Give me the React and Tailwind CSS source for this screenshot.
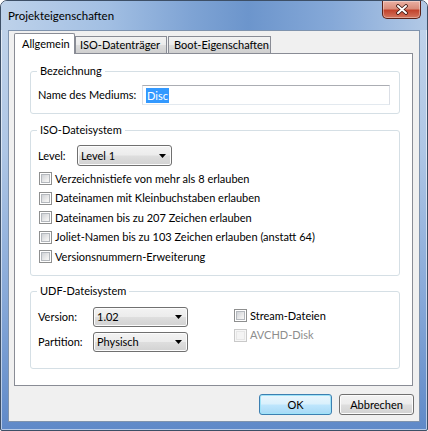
import React from "react";

const font = "font-['Lato','Liberation_Sans',sans-serif] text-[11px] leading-[16px] whitespace-nowrap";

function Checkbox({ label, disabled }) {
  return (
    <div className="flex h-[19.5px] items-center gap-[3px]">
      <span
        className={`ml-[1px] flex h-[13px] w-[13px] flex-none items-center justify-center border ${
          disabled ? "border-[#c9c9c9] bg-[#f7f7f7]" : "border-[#8e8f8f] bg-white"
        }`}
      >
        <span
          className={`h-[9px] w-[9px] border ${
            disabled
              ? "border-[#e6e6e6] bg-[#f4f4f4]"
              : "border-[#b4b8bd] bg-[linear-gradient(135deg,#cfd2d6_0%,#eeeeee_70%,#f7f7f7_100%)]"
          }`}
        />
      </span>
      <span className={disabled ? "text-[#8d8d8d]" : "text-black"}>{label}</span>
    </div>
  );
}

function Combo({ value, tall }) {
  return (
    <div
      className={`flex ${tall ? "h-[21px]" : "h-[20px]"} w-[95px] flex-none items-center justify-between rounded-[3px] border border-[#707070] bg-[linear-gradient(180deg,#f3f3f3_0%,#ececec_48%,#dedede_52%,#d2d2d2_100%)] pl-[3px] pr-[5px] shadow-[inset_0_0_0_1px_#fcfcfc]`}
    >
      <span>{value}</span>
      <svg width="7" height="4" viewBox="0 0 7 4">
        <path d="M0 0h7L3.5 4z" fill="#000" />
      </svg>
    </div>
  );
}

function Group({ title, className, children }) {
  return (
    <div className={`relative rounded-[3px] border border-[#d5dfe5] ${className}`}>
      <span className="absolute -top-[9px] left-[6px] bg-white px-[3px] text-black">{title}</span>
      {children}
    </div>
  );
}

function Button({ children, primary }) {
  return (
    <button
      className={`flex h-[21px] items-center justify-center rounded-[3px] border ${
        primary
          ? "w-[73px] border-[#3c7fb1] bg-[linear-gradient(180deg,#eaf6fd_0%,#d9f0fc_48%,#bee6fd_52%,#a7d9f5_100%)] shadow-[inset_0_0_0_1px_#9fe3f8]"
          : "w-[75px] border-[#707070] bg-[linear-gradient(180deg,#f3f3f3_0%,#ececec_48%,#dedede_52%,#d2d2d2_100%)] shadow-[inset_0_0_0_1px_#fcfcfc]"
      } text-black`}
    >
      {children}
    </button>
  );
}

export default function App() {
  return (
    <div
      className={`flex h-[431px] w-[428px] flex-col rounded-t-[7px] rounded-b-[2px] border border-[#3d4f66] bg-[linear-gradient(180deg,#c3d5eb_0%,#aec6e5_35%,#86a8d8_70%,#5f89c8_100%)] shadow-[inset_0_0_0_1px_rgba(255,255,255,0.55)] ${font}`}
    >
      <div className="flex h-[29px] flex-none items-center justify-between rounded-t-[6px] bg-[linear-gradient(90deg,#bed2ea_0%,#a2bfe3_25%,#7ea3d4_45%,#6c95cc_58%,#86a9d8_78%,#b2c9e6_100%)] pl-[7px] pr-[6px]">
        <span className="text-[11.5px] text-black">Projekteigenschaften</span>
        <div className="flex h-[18px] w-[39px] items-center justify-center self-start rounded-b-[5px] border border-t-0 border-[#5b2219] bg-[linear-gradient(180deg,#eab0a3_0%,#d98d7b_45%,#c2432d_55%,#d4765f_100%)] shadow-[inset_0_0_0_1px_rgba(255,255,255,0.35)]">
          <svg width="14" height="11" viewBox="0 0 14 11">
            <path d="M3 2L11 9M11 2L3 9" stroke="#3a1510" strokeWidth="3.6" strokeLinecap="round" />
            <path d="M3 2L11 9M11 2L3 9" stroke="#ffffff" strokeWidth="2" strokeLinecap="round" />
          </svg>
        </div>
      </div>

      <div className="mx-[7px] mb-[8px] flex h-[392px] flex-none flex-col border border-[#7f93ad] bg-[#f0f0f0] pl-[5px] pr-[6px] pt-[2px]">
        <div className="flex h-[20px] items-end">
          <div className="relative z-10 -mb-px h-[21px] w-[61px] rounded-t-[2px] border border-b-0 border-[#898c95] bg-white pl-[7px] pt-[2px]">
            Allgemein
          </div>
          <div className="h-[17px] w-[92px] border border-b-0 border-[#898c95] bg-[linear-gradient(180deg,#f2f2f2_0%,#ebebeb_50%,#dddddd_50%,#cfcfcf_100%)] pl-[4px]">
            ISO-Datenträger
          </div>
          <div className="ml-[1px] h-[17px] w-[103px] border border-b-0 border-[#898c95] bg-[linear-gradient(180deg,#f2f2f2_0%,#ebebeb_50%,#dddddd_50%,#cfcfcf_100%)] pl-[5px]">
            Boot-Eigenschaften
          </div>
        </div>

        <div className="flex h-[333px] w-[399px] flex-none flex-col border border-[#898c95] bg-white pl-[15px] pr-[12px] pt-[17px]">
          <Group title="Bezeichnung" className="h-[43px] pl-[7px] pr-[9px] pt-[13px]">
            <div className="flex items-center">
              <span className="w-[104px] flex-none">Name des Mediums:</span>
              <div className="flex h-[20px] flex-1 items-center border border-[#dbdfe6] border-t-[#abadb3] border-b-[#e3e9ef] pl-[3px]">
                <span className="bg-[#3399ff] px-[1px] leading-[15px] text-white">Disc</span>
              </div>
            </div>
          </Group>

          <Group title="ISO-Dateisystem" className="mt-[16px] h-[146px] pl-[7px] pt-[14px]">
            <div className="flex items-center">
              <span className="w-[39px] flex-none">Level:</span>
              <Combo value="Level 1" tall />
            </div>
            <div className="mt-[3px] flex flex-col">
              <Checkbox label="Verzeichnistiefe von mehr als 8 erlauben" />
              <Checkbox label="Dateinamen mit Kleinbuchstaben erlauben" />
              <Checkbox label="Dateinamen bis zu 207 Zeichen erlauben" />
              <Checkbox label="Joliet-Namen bis zu 103 Zeichen erlauben (anstatt 64)" />
              <Checkbox label="Versionsnummern-Erweiterung" />
            </div>
          </Group>

          <Group title="UDF-Dateisystem" className="mt-[15px] flex h-[78px] pl-[7px] pt-[15px]">
            <div className="flex flex-col gap-[5px]">
              <div className="flex items-center">
                <span className="w-[55px] flex-none">Version:</span>
                <Combo value="1.02" />
              </div>
              <div className="flex items-center">
                <span className="w-[55px] flex-none">Partition:</span>
                <Combo value="Physisch" />
              </div>
            </div>
            <div className="-mt-px ml-[45px] flex flex-col">
              <Checkbox label="Stream-Dateien" />
              <Checkbox label="AVCHD-Disk" disabled />
            </div>
          </Group>
        </div>

        <div className="-mr-px mt-[8px] flex justify-end gap-[7px]">
          <Button primary>OK</Button>
          <Button>Abbrechen</Button>
        </div>
      </div>
    </div>
  );
}
